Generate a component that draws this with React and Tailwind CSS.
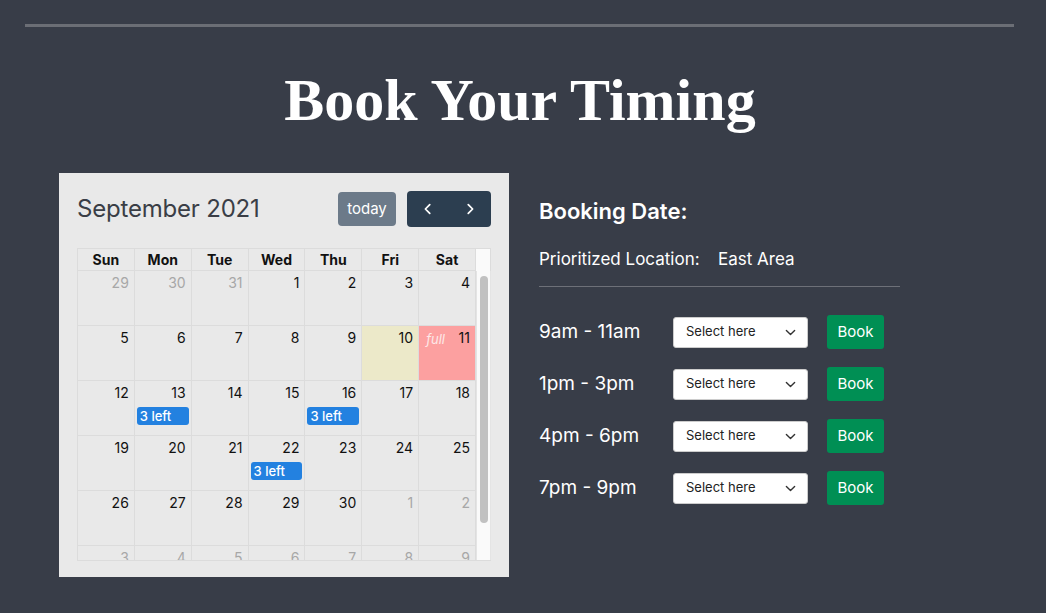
import React from "react";

const weeks = [
  [["29", 1], ["30", 1], ["31", 1], ["1"], ["2"], ["3"], ["4"]],
  [["5"], ["6"], ["7"], ["8"], ["9"], ["10", 0, "today"], ["11", 0, "full"]],
  [["12"], ["13", 0, "ev"], ["14"], ["15"], ["16", 0, "ev"], ["17"], ["18"]],
  [["19"], ["20"], ["21"], ["22", 0, "ev"], ["23"], ["24"], ["25"]],
  [["26"], ["27"], ["28"], ["29"], ["30"], ["1", 1], ["2", 1]],
  [["3", 1], ["4", 1], ["5", 1], ["6", 1], ["7", 1], ["8", 1], ["9", 1]],
];

const days = ["Sun", "Mon", "Tue", "Wed", "Thu", "Fri", "Sat"];

function Cell({ d }) {
  const [num, other, kind] = d;
  let bg = "";
  if (kind === "today") bg = "bg-[#ece9c9]";
  if (kind === "full") bg = "bg-[#fca0a0]";
  return (
    <div className={`h-[55px] border-r border-b border-[#dcdcdc] ${bg} flex flex-col`}>
      <div className="flex items-start justify-between px-[5px] pt-[2px]">
        {kind === "full" ? (
          <span className="text-[13px] italic text-[#fde8e8] pl-[2px] pt-[1px] leading-[20px]">full</span>
        ) : (
          <span />
        )}
        <span className={`text-[14px] leading-[20px] ${other ? "text-[#a7a7a7]" : "text-[#111]"}`}>{num}</span>
      </div>
      {kind === "ev" && (
        <div className="mx-[2px] mt-[4px] h-[18px] rounded-[3px] bg-[#2381e0] text-white text-[13px] leading-[18px] pl-[3px] font-medium">
          3 left
        </div>
      )}
    </div>
  );
}

function Chevron({ dir }) {
  return (
    <svg width="14" height="14" viewBox="0 0 16 16" fill="none" stroke="white" strokeWidth="2" strokeLinecap="round" strokeLinejoin="round">
      {dir === "left" ? <path d="M10 3 L5 8 L10 13" /> : <path d="M6 3 L11 8 L6 13" />}
    </svg>
  );
}

function Slot({ label }) {
  return (
    <div className="flex items-center h-[34px]">
      <div className="w-[134px] text-[19px] text-white">{label}</div>
      <div className="w-[135px] h-[31px] bg-white rounded-[3px] border border-[#ccc] flex items-center justify-between pl-[12px] pr-[11px]">
        <span className="text-[13px] text-[#222]">Select here</span>
        <svg width="11" height="11" viewBox="0 0 16 16" fill="none" stroke="#333" strokeWidth="2" strokeLinecap="round" strokeLinejoin="round">
          <path d="M2 5 L8 11 L14 5" />
        </svg>
      </div>
      <button className="ml-[19px] w-[57px] h-[34px] rounded-[3px] bg-[#008f54] text-white text-[15px]">Book</button>
    </div>
  );
}

export default function App() {
  return (
    <div className="min-h-[613px] w-full bg-[#383d48] overflow-hidden" style={{ fontFamily: "Inter, 'Noto Sans', sans-serif" }}>
      <div className="pt-[24px] pl-[25px]">
        <div className="w-[989px] h-[3px] bg-[#6b6e75]" />
      </div>
      <h1 className="text-center text-white text-[60px] font-bold leading-[70px] mt-[38px] pr-[6px]" style={{ fontFamily: "'Liberation Serif', serif" }}>
        Book Your Timing
      </h1>
      <div className="flex mt-[38px] pl-[59px]">
        <div className="w-[450px] h-[404px] bg-[#e9e9e9] px-[18px] pt-[18px]">
          <div className="flex items-center justify-between h-[36px]">
            <div className="text-[24px] text-[#3a3e46] tracking-[-0.2px]">September 2021</div>
            <div className="flex items-center">
              <button className="h-[34px] w-[58px] rounded-[4px] bg-[#6c7a89] text-white text-[15px]">today</button>
              <div className="ml-[11px] h-[36px] w-[84px] rounded-[4px] bg-[#2c3e50] flex items-center justify-around">
                <Chevron dir="left" />
                <Chevron dir="right" />
              </div>
            </div>
          </div>
          <div className="mt-[21px] border-l border-t border-[#dcdcdc] w-[414px]">
            <div className="flex">
              <div className="grid grid-cols-7 w-[398px]">
                {days.map((d) => (
                  <div key={d} className="h-[22px] border-r border-b border-[#dcdcdc] text-center text-[14px] font-bold text-[#111] leading-[21px]">
                    {d}
                  </div>
                ))}
              </div>
              <div className="w-[15px] bg-[#fafafa] border-r border-[#dcdcdc]" />
            </div>
            <div className="flex h-[290px] border-b border-[#dcdcdc]">
              <div className="w-[398px] overflow-hidden">
                {weeks.map((w, i) => (
                  <div key={i} className="grid grid-cols-7">
                    {w.map((d, j) => (
                      <Cell key={j} d={d} />
                    ))}
                  </div>
                ))}
              </div>
              <div className="w-[15px] bg-[#fafafa] border-r border-l border-[#e4e4e4] pt-[5px] flex justify-center">
                <div className="w-[8px] h-[247px] rounded-full bg-[#c1c1c1]" />
              </div>
            </div>
          </div>
        </div>
        <div className="ml-[30px] w-[361px] pt-[24px]">
          <div className="text-[22px] font-semibold text-white leading-[28px]">Booking Date:</div>
          <div className="flex mt-[22px] text-[17px] text-white leading-[24px]">
            <span className="w-[179px]">Prioritized Location:</span>
            <span>East Area</span>
          </div>
          <div className="mt-[15px] h-[1px] bg-[#6d7078]" />
          <div className="mt-[28px] flex flex-col gap-[18px]">
            <Slot label="9am - 11am" />
            <Slot label="1pm - 3pm" />
            <Slot label="4pm - 6pm" />
            <Slot label="7pm - 9pm" />
          </div>
        </div>
      </div>
    </div>
  );
}
